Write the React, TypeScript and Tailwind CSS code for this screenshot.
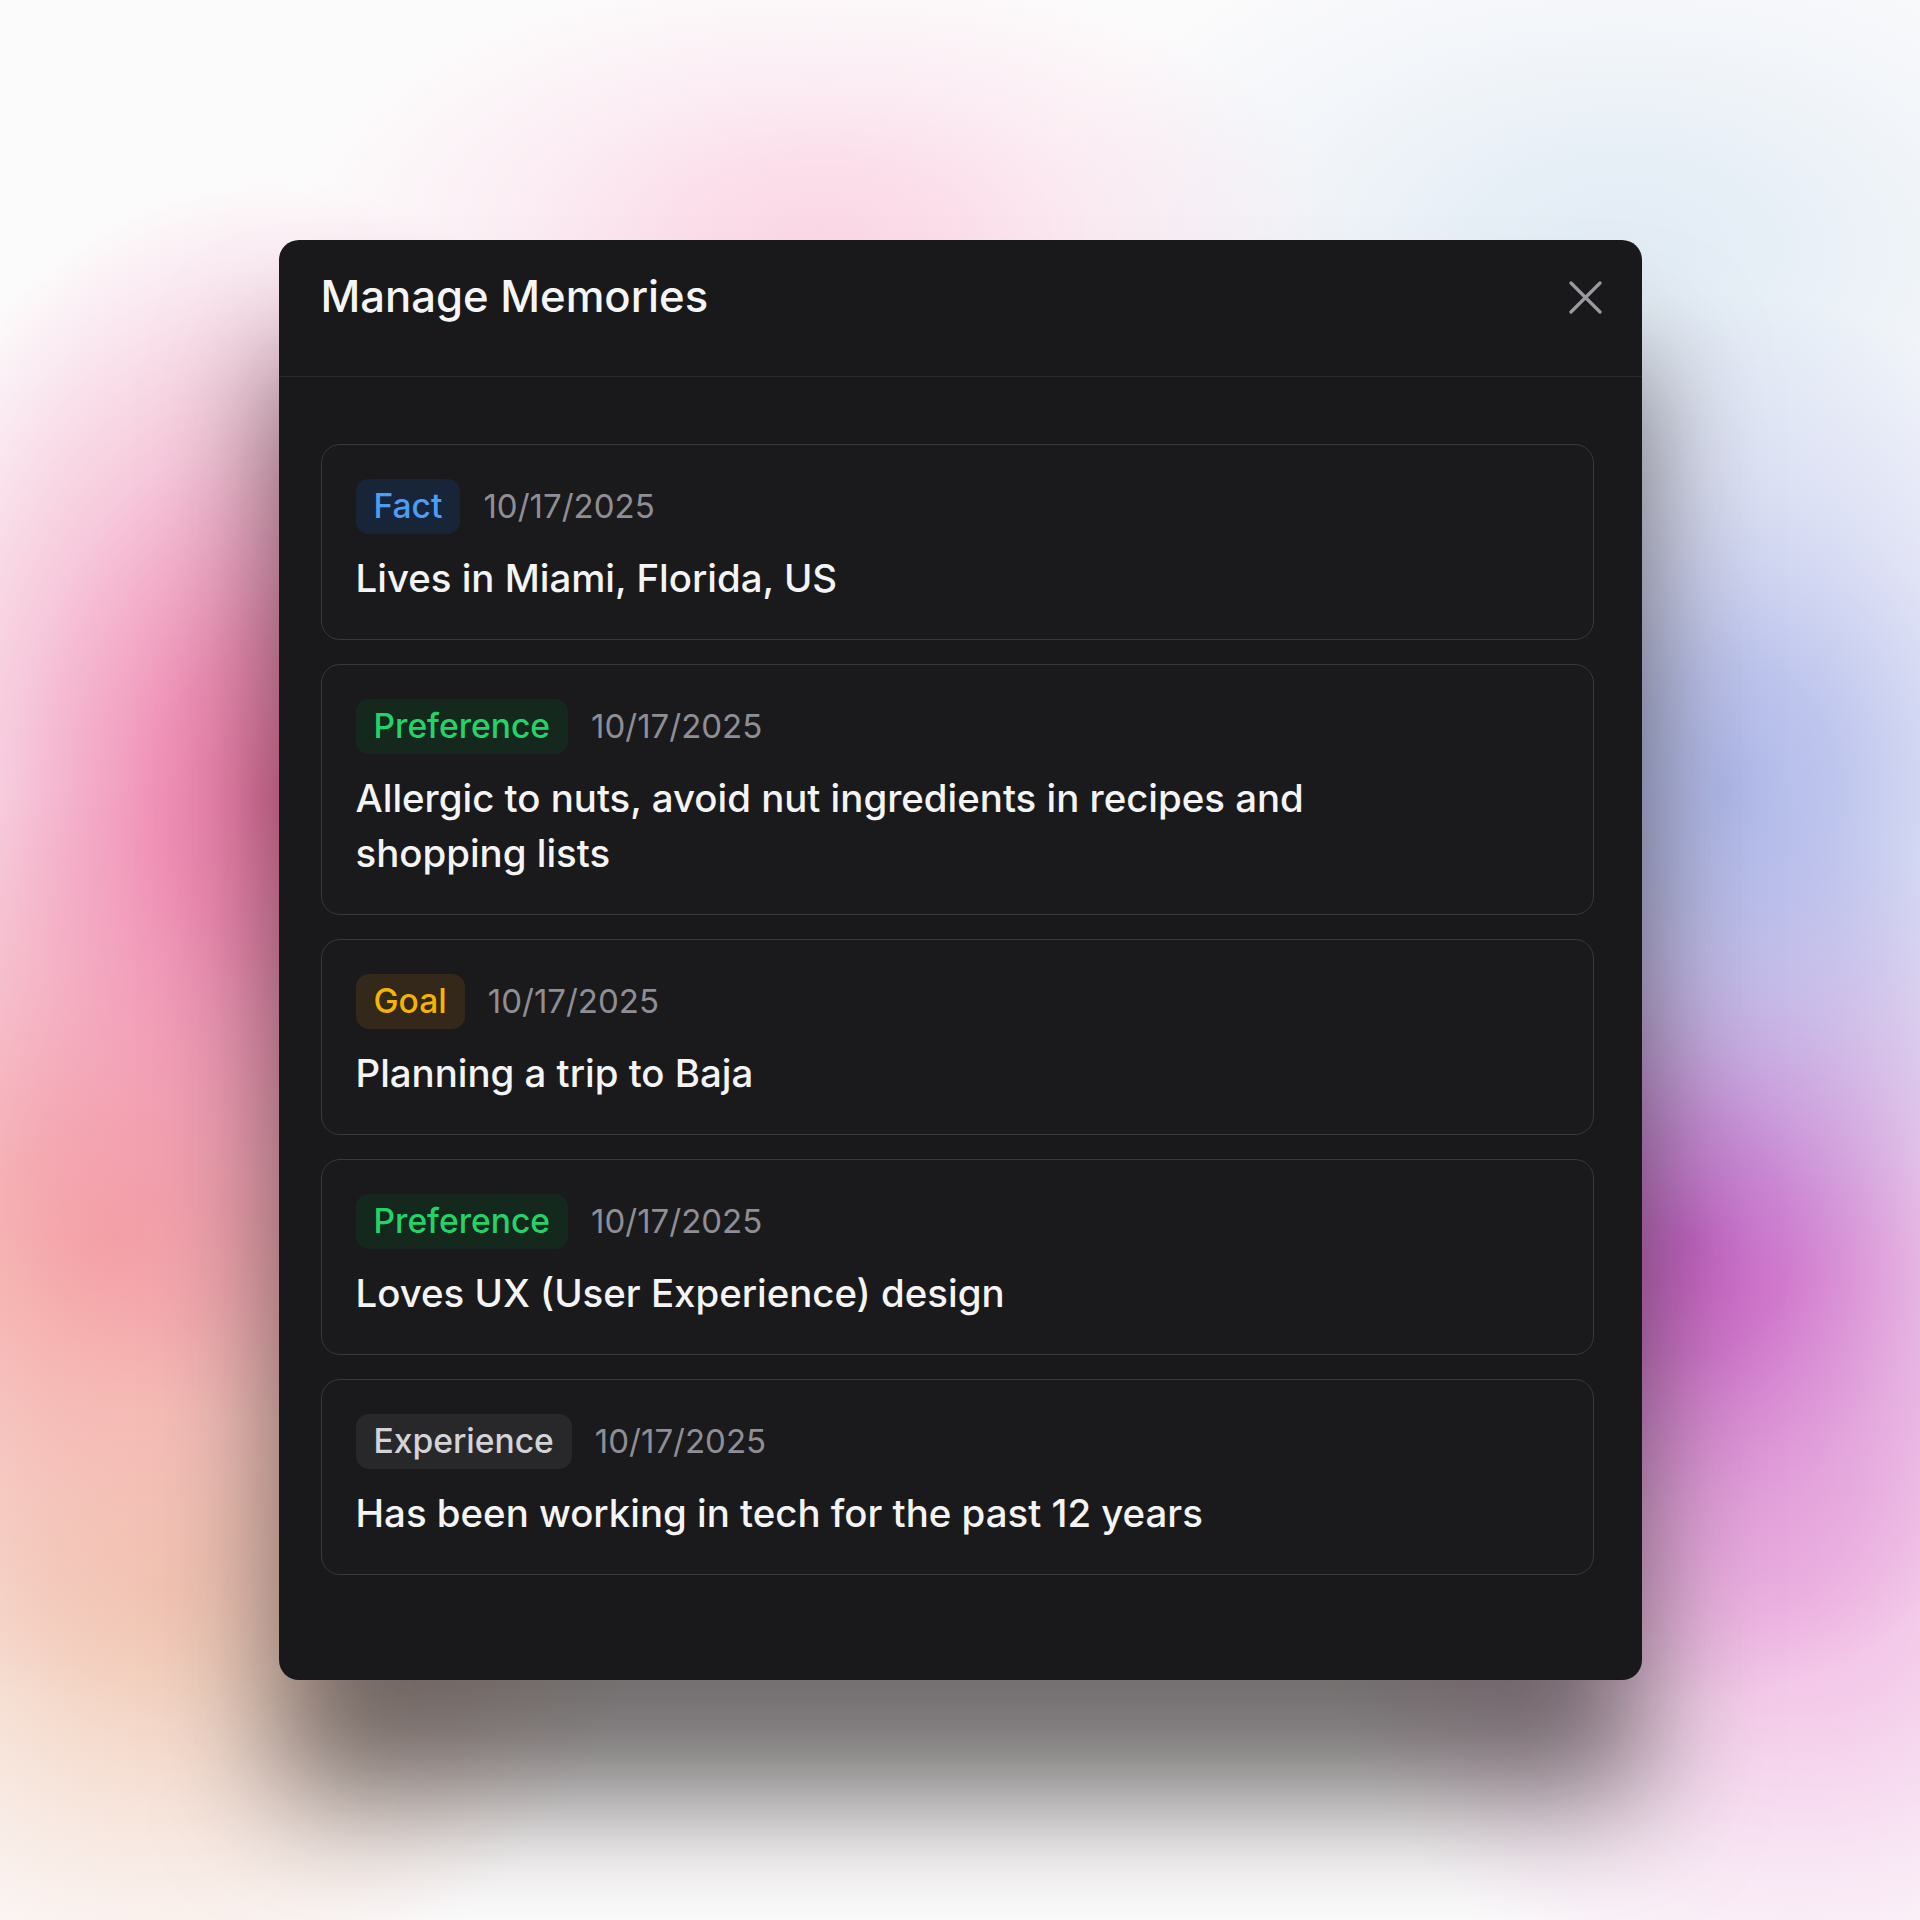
import React from "react";

type Memory = { tag: string; tagCls: string; text: string };

const memories: Memory[] = [
  { tag: "Fact", tagCls: "bg-[#182538] text-[#4b9ef8]", text: "Lives in Miami, Florida, US" },
  {
    tag: "Preference",
    tagCls: "bg-[#15281e] text-[#22d468]",
    text: "Allergic to nuts, avoid nut ingredients in recipes and shopping lists",
  },
  { tag: "Goal", tagCls: "bg-[#33281a] text-[#f4b400]", text: "Planning a trip to Baja" },
  { tag: "Preference", tagCls: "bg-[#15281e] text-[#22d468]", text: "Loves UX (User Experience) design" },
  { tag: "Experience", tagCls: "bg-[#28282b] text-[#d4d4d8]", text: "Has been working in tech for the past 12 years" },
];

function CloseIcon() {
  return (
    <svg width="33" height="33" viewBox="0 0 33 33" fill="none">
      <path d="M2 2 L31 31 M31 2 L2 31" stroke="#9a9aa1" strokeWidth="3.2" strokeLinecap="round" />
    </svg>
  );
}

function MemoryCard({ m }: { m: Memory }) {
  return (
    <div className="rounded-[19px] border border-[#38383d] bg-[#1a1a1c] pl-[34px] pr-[34px] pt-[34px] pb-[33px]">
      <div className="flex items-center gap-[23px]">
        <span className={`flex h-[55px] items-center rounded-[13px] px-[18px] text-[33.6px] font-medium ${m.tagCls}`}>
          {m.tag}
        </span>
        <span className="text-[33px] text-[#8f8e96]">10/17/2025</span>
      </div>
      <p className="mt-[17px] max-w-[1040px] text-[38.4px] font-medium leading-[55px] text-[#f4f4f5]">{m.text}</p>
    </div>
  );
}

export default function App() {
  return (
    <div
      className="flex h-[1920px] w-[1920px] items-center justify-center overflow-hidden bg-[#fcfbfc] bg-[radial-gradient(ellipse_440px_620px_at_270px_800px,#ee7aa8_0%,#ee7aa8d0_25%,#ee7aa860_60%,#ee7aa800_100%),radial-gradient(ellipse_480px_460px_at_110px_1240px,#f5a8a6_0%,#f5a8a6d0_25%,#f5a8a660_60%,#f5a8a600_100%),radial-gradient(ellipse_460px_420px_at_170px_1590px,#f1cab5_0%,#f1cab5d0_25%,#f1cab560_60%,#f1cab500_100%),radial-gradient(ellipse_420px_500px_at_1730px_790px,#b0b9ea_0%,#b0b9ead0_25%,#b0b9ea60_60%,#b0b9ea00_100%),radial-gradient(ellipse_400px_460px_at_1690px_1240px,#c860c4_0%,#c860c4d0_25%,#c860c460_60%,#c860c400_100%),radial-gradient(ellipse_480px_440px_at_1800px_1590px,#f2bfe5_0%,#f2bfe5d0_25%,#f2bfe560_60%,#f2bfe500_100%),radial-gradient(ellipse_520px_260px_at_820px_230px,#fbd8e6_0%,#fbd8e6d0_25%,#fbd8e660_60%,#fbd8e600_100%),radial-gradient(ellipse_600px_360px_at_1620px_250px,#e2ecf5_0%,#e2ecf5d0_25%,#e2ecf560_60%,#e2ecf500_100%)]"
      style={{ fontFamily: "Inter, 'Noto Sans', sans-serif" }}
    >
      <div className="w-[1363px] rounded-[20px] bg-[#19191b] shadow-[0_120px_120px_0_rgba(24,16,16,0.6)]">
        <div className="flex h-[137px] items-start justify-between border-b border-[#2a2a2d] pl-[42px] pr-[40px] pt-[25px]">
          <h2 className="text-[43.6px] font-medium leading-[64px] text-[#f5f5f5]">Manage Memories</h2>
          <div className="flex h-[64px] items-center">
            <CloseIcon />
          </div>
        </div>
        <div className="flex flex-col gap-[24px] pb-[105px] pl-[42px] pr-[48px] pt-[67px]">
          {memories.map((m, i) => (
            <MemoryCard key={i} m={m} />
          ))}
        </div>
      </div>
    </div>
  );
}
